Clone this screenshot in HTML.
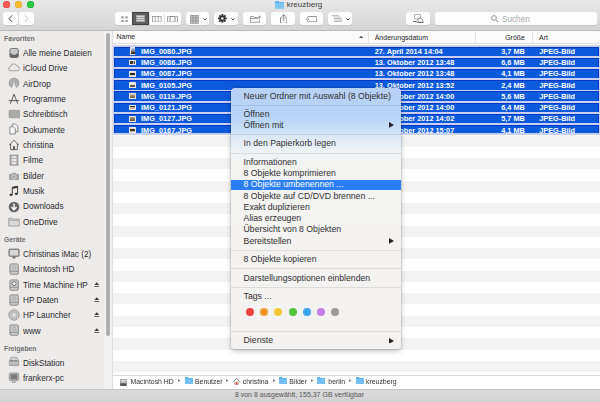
<!DOCTYPE html>
<html><head><meta charset="utf-8"><style>
html,body{margin:0;padding:0;}
body{width:600px;height:402px;overflow:hidden;position:relative;background:#fff;font-family:"Liberation Sans", sans-serif;}
.t{position:absolute;white-space:nowrap;}
.b{position:absolute;}
#wrap{position:absolute;left:0;top:0;width:600px;height:402px;overflow:hidden;filter:blur(0.3px);}
</style></head><body><div id="wrap">
<div class="b" style="left:0.00px;top:0.00px;width:600.00px;height:30.50px;background:linear-gradient(#e8e8e8,#d4d4d4);"></div>
<div class="b" style="left:0.00px;top:29.50px;width:600.00px;height:1.25px;background:#b9b9b9;"></div>
<div class="b" style="left:3.00px;top:1.10px;width:7.00px;height:7.00px;border-radius:50%;background:#fc5b57;box-shadow:inset 0 0 0 0.5px #e0443e;"></div>
<div class="b" style="left:15.00px;top:1.10px;width:7.00px;height:7.00px;border-radius:50%;background:#fdbb2f;box-shadow:inset 0 0 0 0.5px #dea236;"></div>
<div class="b" style="left:26.90px;top:1.10px;width:7.00px;height:7.00px;border-radius:50%;background:#2cc840;box-shadow:inset 0 0 0 0.5px #1aab29;"></div>
<svg class="b" style="left:274.70px;top:1.20px" width="9.5" height="7.5" viewBox="0 0 9.5 7.5"><path d="M0 1 Q0 0 1 0 L3.6 0 L4.4 1 L8.5 1 Q9.5 1 9.5 2 L9.5 6.5 Q9.5 7.5 8.5 7.5 L1 7.5 Q0 7.5 0 6.5 Z" fill="#5eb4f2"/><rect x="0" y="2" width="9.5" height="5.5" rx="1" fill="#7cc6f8"/></svg>
<div class="t" style="left:286.70px;top:1.00px;font-size:8px;line-height:8px;color:#404040;font-weight:normal;">kreuzberg</div>
<div class="b" style="left:3.00px;top:12.40px;width:14.90px;height:12.60px;background:#fdfdfd;border-radius:2.5px;box-shadow:0 0.6px 0.6px rgba(0,0,0,0.18);"></div>
<div class="b" style="left:19.00px;top:12.40px;width:15.00px;height:12.60px;background:#fdfdfd;border-radius:2.5px;box-shadow:0 0.6px 0.6px rgba(0,0,0,0.18);"></div>
<svg class="b" style="left:8.00px;top:15.20px" width="5" height="7.4" viewBox="0 0 5 7.4"><path d="M4.2 0.4 L1 3.7 L4.2 7" fill="none" stroke="#3c3c3c" stroke-width="1"/></svg>
<svg class="b" style="left:23.50px;top:15.20px" width="5" height="7.4" viewBox="0 0 5 7.4"><path d="M0.8 0.4 L4 3.7 L0.8 7" fill="none" stroke="#c4c4c4" stroke-width="1"/></svg>
<div class="b" style="left:115.00px;top:12.40px;width:65.70px;height:12.60px;background:#fdfdfd;border-radius:2.5px;box-shadow:0 0.6px 0.6px rgba(0,0,0,0.18);"></div>
<div class="b" style="left:132.00px;top:12.40px;width:16.70px;height:12.60px;background:#5e5e5e;box-shadow:inset 0 0 0 0.7px #3a3a3a;"></div>
<div class="b" style="left:164.00px;top:13.50px;width:0.60px;height:10.70px;background:#e2e2e2;"></div>
<div class="b" style="left:148.70px;top:13.50px;width:0.50px;height:10.70px;background:#e2e2e2;"></div>
<svg class="b" style="left:120.50px;top:15.50px" width="7" height="6.5" viewBox="0 0 7 6.5"><rect x="0.3" y="0.2" width="2.4" height="2.2" rx="0.4" fill="#9a9a9a"/><rect x="4.3" y="0.2" width="2.4" height="2.2" rx="0.4" fill="#9a9a9a"/><rect x="0.3" y="4" width="2.4" height="2.2" rx="0.4" fill="#9a9a9a"/><rect x="4.3" y="4" width="2.4" height="2.2" rx="0.4" fill="#9a9a9a"/></svg>
<svg class="b" style="left:136.00px;top:15.30px" width="9" height="7" viewBox="0 0 9 7"><rect x="0" y="0" width="9" height="7" fill="#8d8d8d"/><rect x="0.6" y="0.6" width="7.8" height="1.4" fill="#d8d8d8"/><rect x="0.6" y="2.8" width="7.8" height="1.4" fill="#d8d8d8"/><rect x="0.6" y="5" width="7.8" height="1.4" fill="#d8d8d8"/></svg>
<svg class="b" style="left:152.00px;top:15.50px" width="9.5" height="6.5" viewBox="0 0 9.5 6.5"><rect x="0.4" y="0.4" width="8.7" height="5.7" fill="none" stroke="#8a8a8a" stroke-width="0.7"/><line x1="3.3" y1="0.4" x2="3.3" y2="6.1" stroke="#8a8a8a" stroke-width="0.7"/><line x1="6.2" y1="0.4" x2="6.2" y2="6.1" stroke="#8a8a8a" stroke-width="0.7"/></svg>
<svg class="b" style="left:167.00px;top:15.50px" width="11" height="6.5" viewBox="0 0 11 6.5"><path d="M2 0.4 H0.4 V6.1 H2 M9 0.4 H10.6 V6.1 H9" fill="none" stroke="#888" stroke-width="0.8"/><rect x="3" y="0.4" width="5" height="5.7" fill="none" stroke="#777" stroke-width="0.8"/></svg>
<div class="b" style="left:186.10px;top:12.40px;width:23.40px;height:12.60px;background:#fdfdfd;border-radius:2.5px;box-shadow:0 0.6px 0.6px rgba(0,0,0,0.18);"></div>
<svg class="b" style="left:189.60px;top:15.20px" width="9.2" height="8.6" viewBox="0 0 9.2 8.6"><rect x="0.3" y="0.30" width="2.5" height="2.3" fill="#c8c8c8" stroke="#8c8c8c" stroke-width="0.6"/><rect x="3.4" y="0.30" width="2.5" height="2.3" fill="#c8c8c8" stroke="#8c8c8c" stroke-width="0.6"/><rect x="6.5" y="0.30" width="2.5" height="2.3" fill="#c8c8c8" stroke="#8c8c8c" stroke-width="0.6"/><rect x="0.3" y="3.15" width="2.5" height="2.3" fill="#c8c8c8" stroke="#8c8c8c" stroke-width="0.6"/><rect x="3.4" y="3.15" width="2.5" height="2.3" fill="#c8c8c8" stroke="#8c8c8c" stroke-width="0.6"/><rect x="6.5" y="3.15" width="2.5" height="2.3" fill="#c8c8c8" stroke="#8c8c8c" stroke-width="0.6"/><rect x="0.3" y="6.00" width="2.5" height="2.3" fill="#c8c8c8" stroke="#8c8c8c" stroke-width="0.6"/><rect x="3.4" y="6.00" width="2.5" height="2.3" fill="#c8c8c8" stroke="#8c8c8c" stroke-width="0.6"/><rect x="6.5" y="6.00" width="2.5" height="2.3" fill="#c8c8c8" stroke="#8c8c8c" stroke-width="0.6"/></svg>
<svg class="b" style="left:202.80px;top:17.80px" width="4" height="2.6" viewBox="0 0 4 2.6"><path d="M0.4 0.4 L2 2 L3.6 0.4" fill="none" stroke="#444" stroke-width="1"/></svg>
<div class="b" style="left:214.40px;top:12.40px;width:23.30px;height:12.60px;background:#fdfdfd;border-radius:2.5px;box-shadow:0 0.6px 0.6px rgba(0,0,0,0.18);"></div>
<svg class="b" style="left:218.40px;top:14.40px" width="8.8" height="8.8" viewBox="0 0 8.8 8.8"><polygon points="6.83,3.48 8.81,3.51 8.81,5.29 6.83,5.32 6.77,5.47 8.15,6.89 6.89,8.15 5.47,6.77 5.32,6.83 5.29,8.81 3.51,8.81 3.48,6.83 3.33,6.77 1.91,8.15 0.65,6.89 2.03,5.47 1.97,5.32 -0.01,5.29 -0.01,3.51 1.97,3.48 2.03,3.33 0.65,1.91 1.91,0.65 3.33,2.03 3.48,1.97 3.51,-0.01 5.29,-0.01 5.32,1.97 5.47,2.03 6.89,0.65 8.15,1.91 6.77,3.33" fill="#333"/><circle cx="4.4" cy="4.4" r="2.9" fill="#333"/><circle cx="4.4" cy="4.4" r="1.25" fill="#fdfdfd"/></svg>
<svg class="b" style="left:231.20px;top:17.80px" width="4" height="2.6" viewBox="0 0 4 2.6"><path d="M0.4 0.4 L2 2 L3.6 0.4" fill="none" stroke="#444" stroke-width="1"/></svg>
<div class="b" style="left:242.70px;top:12.40px;width:23.70px;height:12.60px;background:#fdfdfd;border-radius:2.5px;box-shadow:0 0.6px 0.6px rgba(0,0,0,0.18);"></div>
<svg class="b" style="left:249.50px;top:14.50px" width="12" height="8" viewBox="0 0 12 8"><path d="M0.5 1.5 L3.5 1.5 L4.3 2.5 L8 2.5 M0.5 1.5 L0.5 7.3 L9.5 7.3 L9.5 4.5 M0.5 3.5 L8.5 3.5" fill="none" stroke="#8a8a8a" stroke-width="0.8"/><path d="M9.5 0.5 V3.5 M8 2 H11" stroke="#8a8a8a" stroke-width="0.8"/></svg>
<div class="b" style="left:271.20px;top:12.40px;width:23.80px;height:12.60px;background:#fdfdfd;border-radius:2.5px;box-shadow:0 0.6px 0.6px rgba(0,0,0,0.18);"></div>
<svg class="b" style="left:279.50px;top:13.50px" width="7.5" height="9.8" viewBox="0 0 7.5 9.8"><path d="M2.2 3.9 H0.5 V9.3 H7 V3.9 H5.3" fill="none" stroke="#666" stroke-width="0.8"/><path d="M3.75 6.8 V0.7 M1.9 2.6 L3.75 0.7 L5.6 2.6" fill="none" stroke="#666" stroke-width="0.8"/></svg>
<div class="b" style="left:299.80px;top:12.40px;width:23.40px;height:12.60px;background:#fdfdfd;border-radius:2.5px;box-shadow:0 0.6px 0.6px rgba(0,0,0,0.18);"></div>
<svg class="b" style="left:305.80px;top:15.50px" width="11.2" height="6.2" viewBox="0 0 11.2 6.2"><path d="M2.5 0.4 H10.2 Q10.8 0.4 10.8 1 V5.2 Q10.8 5.8 10.2 5.8 H2.5 L0.4 3.1 Z" fill="none" stroke="#707070" stroke-width="0.8"/><circle cx="2.6" cy="3.1" r="0.6" fill="#707070"/></svg>
<div class="b" style="left:328.20px;top:12.40px;width:23.60px;height:12.60px;background:#fdfdfd;border-radius:2.5px;box-shadow:0 0.6px 0.6px rgba(0,0,0,0.18);"></div>
<svg class="b" style="left:331.80px;top:15.00px" width="10.2" height="7" viewBox="0 0 10.2 7"><path d="M0 0.5 H7 M1 2 H8.5 M2 3.5 H10 M2 5 H10 M2 6.5 H10" stroke="#9a9a9a" stroke-width="0.65"/></svg>
<svg class="b" style="left:345.50px;top:17.80px" width="4" height="2.6" viewBox="0 0 4 2.6"><path d="M0.4 0.4 L2 2 L3.6 0.4" fill="none" stroke="#444" stroke-width="1"/></svg>
<div class="b" style="left:406.40px;top:12.40px;width:23.60px;height:12.60px;background:#fdfdfd;border-radius:2.5px;box-shadow:0 0.6px 0.6px rgba(0,0,0,0.18);"></div>
<svg class="b" style="left:412.50px;top:14.30px" width="11" height="9" viewBox="0 0 11 9"><rect x="1.6" y="0.5" width="6" height="4.6" rx="0.5" fill="none" stroke="#888" stroke-width="0.7"/><path d="M4.6 7.2 Q4.6 4 7.2 4 Q9.8 4 9.8 7.2" fill="#fdfdfd" stroke="#666" stroke-width="0.7"/><path d="M0.3 7.6 H3.6 M4.2 8.3 H10.6" stroke="#333" stroke-width="0.9"/></svg>
<div class="b" style="left:435.00px;top:12.40px;width:161.70px;height:12.60px;background:#fdfdfd;border-radius:2.5px;box-shadow:0 0.6px 0.6px rgba(0,0,0,0.18);"></div>
<svg class="b" style="left:491.00px;top:14.80px" width="7.5" height="7.5" viewBox="0 0 7.5 7.5"><circle cx="3" cy="3" r="2.4" fill="none" stroke="#8a8a8a" stroke-width="0.9"/><path d="M4.8 4.8 L7 7" stroke="#8a8a8a" stroke-width="1"/></svg>
<div class="t" style="left:502.00px;top:16.00px;font-size:8.2px;line-height:8.2px;color:#a8a8a8;font-weight:normal;">Suchen</div>
<div class="b" style="left:0.00px;top:30.75px;width:112.50px;height:358.25px;background:#ecebea;"></div>
<div class="b" style="left:112.20px;top:30.75px;width:0.80px;height:358.25px;background:#dedede;"></div>
<div class="b" style="left:103.60px;top:30.75px;width:8.70px;height:358.25px;background:#f1f1f1;"></div>
<div class="b" style="left:105.50px;top:32.50px;width:4.50px;height:303.00px;background:linear-gradient(90deg,#b8b8b8,#a9a9a9 50%,#b8b8b8);border-radius:2.3px;"></div>
<div class="t" style="left:4.00px;top:36.00px;font-size:6.8px;line-height:6.8px;color:#707070;font-weight:bold;">Favoriten</div>
<div class="t" style="left:23.00px;top:50.00px;font-size:8.2px;line-height:8.2px;color:#2a2a2a;font-weight:normal;">Alle meine Dateien</div>
<svg class="b" style="left:8.30px;top:46.50px" width="12" height="12" viewBox="0 0 12 12"><rect x="1.9" y="1.5" width="8.4" height="9" rx="1.4" fill="#c8c8c8" stroke="#5a5a5a" stroke-width="0.8"/><path d="M1.9 6.6 H3.6 Q4.1 8 6.1 8 Q8.1 8 8.6 6.6 H10.3 V9.1 Q10.3 10.5 8.9 10.5 H3.3 Q1.9 10.5 1.9 9.1 Z" fill="#666"/></svg>
<div class="t" style="left:23.00px;top:65.00px;font-size:8.2px;line-height:8.2px;color:#2a2a2a;font-weight:normal;">iCloud Drive</div>
<svg class="b" style="left:8.30px;top:61.20px" width="12" height="12" viewBox="0 0 12 12"><path d="M2.9 9.8 A2.1 2.1 0 0 1 2.6 5.6 A3.3 3.3 0 0 1 8.9 4.9 A2.45 2.45 0 0 1 9.1 9.8 Z" fill="none" stroke="#8a8a8a" stroke-width="0.8"/></svg>
<div class="t" style="left:23.00px;top:81.00px;font-size:8.2px;line-height:8.2px;color:#2a2a2a;font-weight:normal;">AirDrop</div>
<svg class="b" style="left:8.30px;top:77.20px" width="12" height="12" viewBox="0 0 12 12"><circle cx="6" cy="6" r="5.3" fill="#9a9a9a"/><circle cx="6" cy="6" r="4" fill="none" stroke="#cfcfcf" stroke-width="0.55"/><circle cx="6" cy="6" r="2.6" fill="none" stroke="#cfcfcf" stroke-width="0.55"/><circle cx="6" cy="6" r="1.2" fill="#cfcfcf"/><path d="M6 6.2 L3.4 11.8 H8.6 Z" fill="#ebebeb"/></svg>
<div class="t" style="left:23.00px;top:96.00px;font-size:8.2px;line-height:8.2px;color:#2a2a2a;font-weight:normal;">Programme</div>
<svg class="b" style="left:8.30px;top:92.70px" width="12" height="12" viewBox="0 0 12 12"><path d="M6 1.2 L2.2 10.8 M6 1.2 L9.8 10.8 M0.8 7.6 H11.2" stroke="#4e4e4e" stroke-width="0.9" fill="none"/></svg>
<div class="t" style="left:23.00px;top:111.00px;font-size:8.2px;line-height:8.2px;color:#2a2a2a;font-weight:normal;">Schreibtisch</div>
<svg class="b" style="left:8.30px;top:108.20px" width="12" height="12" viewBox="0 0 12 12"><rect x="1" y="2.3" width="10.8" height="7.5" rx="0.8" fill="#a9a9a9" stroke="#8e8e8e" stroke-width="0.6"/></svg>
<div class="t" style="left:23.00px;top:127.00px;font-size:8.2px;line-height:8.2px;color:#2a2a2a;font-weight:normal;">Dokumente</div>
<svg class="b" style="left:8.30px;top:123.30px" width="12" height="12" viewBox="0 0 12 12"><path d="M4.3 1 H7.6 L9.9 3.3 V8.8 H4.3 Z" fill="#f2f2f2" stroke="#777" stroke-width="0.8"/><path d="M1.8 3.8 H5.3 L7.4 5.9 V11 H1.8 Z" fill="#f4f4f4" stroke="#777" stroke-width="0.8"/></svg>
<div class="t" style="left:23.00px;top:142.00px;font-size:8.2px;line-height:8.2px;color:#2a2a2a;font-weight:normal;">christina</div>
<svg class="b" style="left:8.30px;top:138.70px" width="12" height="12" viewBox="0 0 12 12"><path d="M1 6.2 L6 1.3 L11 6.2 M2.6 4.8 V10.6 H9.4 V4.8" fill="none" stroke="#555" stroke-width="0.9"/><rect x="5" y="7.3" width="2" height="3.3" fill="#555"/></svg>
<div class="t" style="left:23.00px;top:157.00px;font-size:8.2px;line-height:8.2px;color:#2a2a2a;font-weight:normal;">Filme</div>
<svg class="b" style="left:8.30px;top:153.80px" width="12" height="12" viewBox="0 0 12 12"><rect x="2.2" y="1.2" width="7.6" height="9.8" fill="#ececec" stroke="#7a7a7a" stroke-width="0.9"/><path d="M2.2 4.4 H9.8 M2.2 7.7 H9.8 M3.7 1.2 V11 M8.3 1.2 V11" stroke="#999" stroke-width="0.6"/></svg>
<div class="t" style="left:23.00px;top:173.00px;font-size:8.2px;line-height:8.2px;color:#2a2a2a;font-weight:normal;">Bilder</div>
<svg class="b" style="left:8.30px;top:170.20px" width="12" height="12" viewBox="0 0 12 12"><path d="M1 4 H3.5 L4.3 2.7 H7.7 L8.5 4 H11 V10 H1 Z" fill="#a3a3a3"/><circle cx="6" cy="6.9" r="2.1" fill="none" stroke="#dedede" stroke-width="0.8"/></svg>
<div class="t" style="left:23.00px;top:188.00px;font-size:8.2px;line-height:8.2px;color:#2a2a2a;font-weight:normal;">Musik</div>
<svg class="b" style="left:8.30px;top:185.10px" width="12" height="12" viewBox="0 0 12 12"><path d="M4.3 9.6 V2.3 L9.6 1.2 V8.6" fill="none" stroke="#2e2e2e" stroke-width="0.9"/><ellipse cx="3" cy="9.8" rx="1.6" ry="1.15" fill="#2e2e2e"/><ellipse cx="8.3" cy="8.8" rx="1.6" ry="1.15" fill="#2e2e2e"/><path d="M4.3 2.3 L9.6 1.2 V2.7 L4.3 3.8 Z" fill="#2e2e2e"/></svg>
<div class="t" style="left:23.00px;top:203.00px;font-size:8.2px;line-height:8.2px;color:#2a2a2a;font-weight:normal;">Downloads</div>
<svg class="b" style="left:8.30px;top:200.60px" width="12" height="12" viewBox="0 0 12 12"><circle cx="6" cy="6" r="5.3" fill="#656565"/><path d="M6 2.6 V8.6 M3.4 6.1 L6 8.8 L8.6 6.1" stroke="#fff" stroke-width="1.4" fill="none"/></svg>
<div class="t" style="left:23.00px;top:219.00px;font-size:8.2px;line-height:8.2px;color:#2a2a2a;font-weight:normal;">OneDrive</div>
<svg class="b" style="left:8.30px;top:215.50px" width="12" height="12" viewBox="0 0 12 12"><path d="M0.8 2.2 H4.3 L5.2 3.2 H11.2 V10 H0.8 Z" fill="#dadada" stroke="#888" stroke-width="0.7"/><path d="M0.8 4.2 H11.2" stroke="#888" stroke-width="0.6"/></svg>
<div class="t" style="left:4.00px;top:237.00px;font-size:6.8px;line-height:6.8px;color:#707070;font-weight:bold;">Geräte</div>
<div class="t" style="left:23.00px;top:251.00px;font-size:8.2px;line-height:8.2px;color:#2a2a2a;font-weight:normal;">Christinas iMac (2)</div>
<svg class="b" style="left:8.30px;top:248.30px" width="12" height="12" viewBox="0 0 12 12"><rect x="1" y="1.2" width="10" height="7" rx="0.8" fill="#d6d6d6" stroke="#505050" stroke-width="0.9"/><path d="M4.8 8.3 L4.3 10.4 H7.7 L7.2 8.3 Z" fill="#777"/></svg>
<div class="t" style="left:23.00px;top:266.00px;font-size:8.2px;line-height:8.2px;color:#2a2a2a;font-weight:normal;">Macintosh HD</div>
<svg class="b" style="left:8.30px;top:263.30px" width="12" height="12" viewBox="0 0 12 12"><rect x="1.9" y="0.9" width="8.4" height="10.4" rx="1.3" fill="#cacaca" stroke="#7a7a7a" stroke-width="0.8"/><path d="M1.9 8.3 H10.3" stroke="#7a7a7a" stroke-width="0.7"/><circle cx="6.1" cy="4.6" r="1.7" fill="none" stroke="#999" stroke-width="0.6"/></svg>
<div class="t" style="left:23.00px;top:282.00px;font-size:8.2px;line-height:8.2px;color:#2a2a2a;font-weight:normal;">Time Machine HP</div>
<svg class="b" style="left:8.30px;top:278.60px" width="12" height="12" viewBox="0 0 12 12"><rect x="1.9" y="0.9" width="8.4" height="10.4" rx="1.3" fill="#cacaca" stroke="#7a7a7a" stroke-width="0.8"/><path d="M1.9 8.3 H10.3" stroke="#7a7a7a" stroke-width="0.7"/><circle cx="6.1" cy="4.6" r="2" fill="#f0f0f0" stroke="#555" stroke-width="0.7"/></svg>
<svg class="b" style="left:94.00px;top:281.66px" width="5.5" height="5" viewBox="0 0 5.5 5"><path d="M2.75 0.3 L5.2 3 H0.3 Z M0.3 4 H5.2 V4.8 H0.3 Z" fill="#3a3a3a"/></svg>
<div class="t" style="left:23.00px;top:297.00px;font-size:8.2px;line-height:8.2px;color:#2a2a2a;font-weight:normal;">HP Daten</div>
<svg class="b" style="left:8.30px;top:294.10px" width="12" height="12" viewBox="0 0 12 12"><rect x="1.9" y="0.9" width="8.4" height="10.4" rx="1.3" fill="#cacaca" stroke="#7a7a7a" stroke-width="0.8"/><path d="M1.9 8.3 H10.3" stroke="#7a7a7a" stroke-width="0.7"/><circle cx="6.1" cy="4.6" r="1.7" fill="none" stroke="#999" stroke-width="0.6"/></svg>
<svg class="b" style="left:94.00px;top:296.99px" width="5.5" height="5" viewBox="0 0 5.5 5"><path d="M2.75 0.3 L5.2 3 H0.3 Z M0.3 4 H5.2 V4.8 H0.3 Z" fill="#3a3a3a"/></svg>
<div class="t" style="left:23.00px;top:312.00px;font-size:8.2px;line-height:8.2px;color:#2a2a2a;font-weight:normal;">HP Launcher</div>
<svg class="b" style="left:8.30px;top:309.30px" width="12" height="12" viewBox="0 0 12 12"><circle cx="6" cy="6" r="5.2" fill="#d0d0d0" stroke="#8a8a8a" stroke-width="0.8"/><circle cx="6" cy="6" r="3.3" fill="none" stroke="#9a9a9a" stroke-width="0.6"/><circle cx="6" cy="6" r="1" fill="#eee"/></svg>
<svg class="b" style="left:94.00px;top:312.32px" width="5.5" height="5" viewBox="0 0 5.5 5"><path d="M2.75 0.3 L5.2 3 H0.3 Z M0.3 4 H5.2 V4.8 H0.3 Z" fill="#3a3a3a"/></svg>
<div class="t" style="left:23.00px;top:328.00px;font-size:8.2px;line-height:8.2px;color:#2a2a2a;font-weight:normal;">www</div>
<svg class="b" style="left:8.30px;top:324.40px" width="12" height="12" viewBox="0 0 12 12"><rect x="1.9" y="0.9" width="8.4" height="10.4" rx="1.3" fill="#cacaca" stroke="#7a7a7a" stroke-width="0.8"/><path d="M1.9 8.3 H10.3" stroke="#7a7a7a" stroke-width="0.7"/><circle cx="6.1" cy="4.6" r="1.7" fill="none" stroke="#999" stroke-width="0.6"/></svg>
<svg class="b" style="left:94.00px;top:327.65px" width="5.5" height="5" viewBox="0 0 5.5 5"><path d="M2.75 0.3 L5.2 3 H0.3 Z M0.3 4 H5.2 V4.8 H0.3 Z" fill="#3a3a3a"/></svg>
<div class="t" style="left:4.00px;top:346.00px;font-size:6.8px;line-height:6.8px;color:#707070;font-weight:bold;">Freigaben</div>
<div class="t" style="left:23.00px;top:360.00px;font-size:8.2px;line-height:8.2px;color:#2a2a2a;font-weight:normal;">DiskStation</div>
<svg class="b" style="left:8.30px;top:356.20px" width="12" height="12" viewBox="0 0 12 12"><path d="M1.8 4.5 L3 1.3 H9 L10.2 4.5 Z" fill="#d4d4d4" stroke="#888" stroke-width="0.7"/><rect x="1.3" y="4.5" width="9.4" height="5" rx="0.5" fill="#b8b8b8" stroke="#888" stroke-width="0.7"/><path d="M1.3 6.8 H10.7" stroke="#d8d8d8" stroke-width="0.6"/><path d="M3 5.6 H5 M7 5.6 H9" stroke="#666" stroke-width="0.6"/></svg>
<div class="t" style="left:23.00px;top:375.00px;font-size:8.2px;line-height:8.2px;color:#2a2a2a;font-weight:normal;">frankerx-pc</div>
<svg class="b" style="left:8.30px;top:372.10px" width="12" height="12" viewBox="0 0 12 12"><rect x="1.3" y="1" width="9.4" height="7.6" rx="1.2" fill="#c4c4c4" stroke="#808080" stroke-width="0.7"/><rect x="2.6" y="2.2" width="6.8" height="5.2" fill="#7a7a7a"/><path d="M3.8 10.2 H8.2" stroke="#888" stroke-width="1"/></svg>
<div class="b" style="left:113.00px;top:30.75px;width:487.00px;height:344.75px;background:#ffffff;"></div>
<div class="b" style="left:113.00px;top:30.75px;width:487.00px;height:12.75px;background:#fcfcfc;"></div>
<div class="b" style="left:113.00px;top:43.20px;width:487.00px;height:1.20px;background:#dedede;"></div>
<div class="t" style="left:116.50px;top:33.00px;font-size:7px;line-height:7px;color:#1c1c1c;font-weight:normal;">Name</div>
<svg class="b" style="left:359.30px;top:35.60px" width="4.2" height="2.6" viewBox="0 0 4.2 2.6"><path d="M0.5 2.3 L2.1 0.7 L3.7 2.3" fill="none" stroke="#3a3a3a" stroke-width="1.1"/></svg>
<div class="b" style="left:367.60px;top:32.00px;width:0.80px;height:11.00px;background:#e2e2e2;"></div>
<div class="b" style="left:475.20px;top:32.00px;width:0.80px;height:11.00px;background:#e2e2e2;"></div>
<div class="b" style="left:532.20px;top:32.00px;width:0.80px;height:11.00px;background:#e2e2e2;"></div>
<div class="t" style="left:374.70px;top:34.00px;font-size:7px;line-height:7px;color:#1c1c1c;font-weight:normal;">Änderungsdatum</div>
<div class="t" style="right:75.00px;top:34.00px;font-size:7px;line-height:7px;color:#1c1c1c;font-weight:normal;">Größe</div>
<div class="t" style="left:539.00px;top:34.00px;font-size:7px;line-height:7px;color:#1c1c1c;font-weight:normal;">Art</div>
<div class="b" style="left:113.00px;top:135.58px;width:487.00px;height:11.26px;background:#f3f3f3;"></div>
<div class="b" style="left:113.00px;top:158.10px;width:487.00px;height:11.26px;background:#f3f3f3;"></div>
<div class="b" style="left:113.00px;top:180.62px;width:487.00px;height:11.26px;background:#f3f3f3;"></div>
<div class="b" style="left:113.00px;top:203.14px;width:487.00px;height:11.26px;background:#f3f3f3;"></div>
<div class="b" style="left:113.00px;top:225.66px;width:487.00px;height:11.26px;background:#f3f3f3;"></div>
<div class="b" style="left:113.00px;top:248.18px;width:487.00px;height:11.26px;background:#f3f3f3;"></div>
<div class="b" style="left:113.00px;top:270.70px;width:487.00px;height:11.26px;background:#f3f3f3;"></div>
<div class="b" style="left:113.00px;top:293.22px;width:487.00px;height:11.26px;background:#f3f3f3;"></div>
<div class="b" style="left:113.00px;top:315.74px;width:487.00px;height:11.26px;background:#f3f3f3;"></div>
<div class="b" style="left:113.00px;top:338.26px;width:487.00px;height:11.26px;background:#f3f3f3;"></div>
<div class="b" style="left:113.00px;top:360.78px;width:487.00px;height:11.26px;background:#f3f3f3;"></div>
<div class="b" style="left:113.00px;top:45.20px;width:486.50px;height:89.60px;background:#c9d0f4;"></div>
<div class="b" style="left:113.80px;top:47.20px;width:485.20px;height:8.74px;background:#0c5adc;border-top:0.8px solid #0038c8;border-left:0.8px solid #0038c8;border-right:0.8px solid #0038c8;box-sizing:border-box;"></div>
<div class="b" style="left:130.20px;top:46.90px;width:5.20px;height:8.20px;background:#efebe2;border-radius:0.6px;"></div>
<div class="b" style="left:131.00px;top:47.70px;width:3.60px;height:6.60px;background:linear-gradient(#c9d2e6 0%,#8c8f9c 45%,#5a4632 70%,#1e1a16 100%);"></div>
<div class="t" style="left:141.00px;top:48.00px;font-size:7.35px;line-height:7.35px;color:#ffffff;font-weight:bold;">IMG_0080.JPG</div>
<div class="t" style="left:374.70px;top:48.00px;font-size:7.35px;line-height:7.35px;color:#ffffff;font-weight:bold;">27. April 2014 14:04</div>
<div class="t" style="right:75.20px;top:48.00px;font-size:7.35px;line-height:7.35px;color:#ffffff;font-weight:bold;">3,7 MB</div>
<div class="t" style="left:539.20px;top:48.00px;font-size:7.35px;line-height:7.35px;color:#ffffff;font-weight:bold;">JPEG-Bild</div>
<div class="b" style="left:113.80px;top:57.54px;width:485.20px;height:9.64px;background:#0c5adc;border-top:0.8px solid #0038c8;border-left:0.8px solid #0038c8;border-right:0.8px solid #0038c8;box-sizing:border-box;"></div>
<div class="b" style="left:129.30px;top:59.64px;width:6.90px;height:5.70px;background:#efebe2;border-radius:0.6px;"></div>
<div class="b" style="left:130.40px;top:60.74px;width:4.70px;height:3.60px;background:linear-gradient(90deg,#3a3632 0 55%,#c8bea8 55% 72%,#4a4642 72%);"></div>
<div class="t" style="left:141.00px;top:59.00px;font-size:7.35px;line-height:7.35px;color:#ffffff;font-weight:bold;">IMG_0086.JPG</div>
<div class="t" style="left:374.70px;top:59.00px;font-size:7.35px;line-height:7.35px;color:#ffffff;font-weight:bold;">13. Oktober 2012 13:48</div>
<div class="t" style="right:75.20px;top:59.00px;font-size:7.35px;line-height:7.35px;color:#ffffff;font-weight:bold;">6,6 MB</div>
<div class="t" style="left:539.20px;top:59.00px;font-size:7.35px;line-height:7.35px;color:#ffffff;font-weight:bold;">JPEG-Bild</div>
<div class="b" style="left:113.80px;top:68.78px;width:485.20px;height:9.64px;background:#0c5adc;border-top:0.8px solid #0038c8;border-left:0.8px solid #0038c8;border-right:0.8px solid #0038c8;box-sizing:border-box;"></div>
<div class="b" style="left:129.30px;top:70.88px;width:6.90px;height:5.70px;background:#efebe2;border-radius:0.6px;"></div>
<div class="b" style="left:130.40px;top:71.98px;width:4.70px;height:3.60px;background:linear-gradient(#e4e0d8 0 30%,#2a2a2a 30% 70%,#d8d3c8 70%);"></div>
<div class="t" style="left:141.00px;top:70.00px;font-size:7.35px;line-height:7.35px;color:#ffffff;font-weight:bold;">IMG_0087.JPG</div>
<div class="t" style="left:374.70px;top:70.00px;font-size:7.35px;line-height:7.35px;color:#ffffff;font-weight:bold;">13. Oktober 2012 13:48</div>
<div class="t" style="right:75.20px;top:70.00px;font-size:7.35px;line-height:7.35px;color:#ffffff;font-weight:bold;">4,1 MB</div>
<div class="t" style="left:539.20px;top:70.00px;font-size:7.35px;line-height:7.35px;color:#ffffff;font-weight:bold;">JPEG-Bild</div>
<div class="b" style="left:113.80px;top:80.02px;width:485.20px;height:9.64px;background:#0c5adc;border-top:0.8px solid #0038c8;border-left:0.8px solid #0038c8;border-right:0.8px solid #0038c8;box-sizing:border-box;"></div>
<div class="b" style="left:129.30px;top:82.12px;width:6.90px;height:5.70px;background:#efebe2;border-radius:0.6px;"></div>
<div class="b" style="left:130.40px;top:83.22px;width:4.70px;height:3.60px;background:linear-gradient(#e8e4dc 0 45%,#5a544c 45%);"></div>
<div class="t" style="left:141.00px;top:82.00px;font-size:7.35px;line-height:7.35px;color:#ffffff;font-weight:bold;">IMG_0105.JPG</div>
<div class="t" style="left:374.70px;top:82.00px;font-size:7.35px;line-height:7.35px;color:#ffffff;font-weight:bold;">13. Oktober 2012 13:52</div>
<div class="t" style="right:75.20px;top:82.00px;font-size:7.35px;line-height:7.35px;color:#ffffff;font-weight:bold;">2,4 MB</div>
<div class="t" style="left:539.20px;top:82.00px;font-size:7.35px;line-height:7.35px;color:#ffffff;font-weight:bold;">JPEG-Bild</div>
<div class="b" style="left:113.80px;top:91.26px;width:485.20px;height:9.64px;background:#0c5adc;border-top:0.8px solid #0038c8;border-left:0.8px solid #0038c8;border-right:0.8px solid #0038c8;box-sizing:border-box;"></div>
<div class="b" style="left:129.30px;top:93.36px;width:6.90px;height:5.70px;background:#efebe2;border-radius:0.6px;"></div>
<div class="b" style="left:130.40px;top:94.46px;width:4.70px;height:3.60px;background:linear-gradient(#c8b8a0,#6a5a48);"></div>
<div class="t" style="left:141.00px;top:93.00px;font-size:7.35px;line-height:7.35px;color:#ffffff;font-weight:bold;">IMG_0119.JPG</div>
<div class="t" style="left:374.70px;top:93.00px;font-size:7.35px;line-height:7.35px;color:#ffffff;font-weight:bold;">13. Oktober 2012 14:00</div>
<div class="t" style="right:75.20px;top:93.00px;font-size:7.35px;line-height:7.35px;color:#ffffff;font-weight:bold;">5,6 MB</div>
<div class="t" style="left:539.20px;top:93.00px;font-size:7.35px;line-height:7.35px;color:#ffffff;font-weight:bold;">JPEG-Bild</div>
<div class="b" style="left:113.80px;top:102.50px;width:485.20px;height:9.64px;background:#0c5adc;border-top:0.8px solid #0038c8;border-left:0.8px solid #0038c8;border-right:0.8px solid #0038c8;box-sizing:border-box;"></div>
<div class="b" style="left:129.30px;top:104.60px;width:6.90px;height:5.70px;background:#efebe2;border-radius:0.6px;"></div>
<div class="b" style="left:130.40px;top:105.70px;width:4.70px;height:3.60px;background:linear-gradient(#2a2a2a 0 35%,#c8b8a0 35%);"></div>
<div class="t" style="left:141.00px;top:104.00px;font-size:7.35px;line-height:7.35px;color:#ffffff;font-weight:bold;">IMG_0121.JPG</div>
<div class="t" style="left:374.70px;top:104.00px;font-size:7.35px;line-height:7.35px;color:#ffffff;font-weight:bold;">13. Oktober 2012 14:00</div>
<div class="t" style="right:75.20px;top:104.00px;font-size:7.35px;line-height:7.35px;color:#ffffff;font-weight:bold;">6,4 MB</div>
<div class="t" style="left:539.20px;top:104.00px;font-size:7.35px;line-height:7.35px;color:#ffffff;font-weight:bold;">JPEG-Bild</div>
<div class="b" style="left:113.80px;top:113.74px;width:485.20px;height:9.64px;background:#0c5adc;border-top:0.8px solid #0038c8;border-left:0.8px solid #0038c8;border-right:0.8px solid #0038c8;box-sizing:border-box;"></div>
<div class="b" style="left:129.30px;top:115.84px;width:6.90px;height:5.70px;background:#efebe2;border-radius:0.6px;"></div>
<div class="b" style="left:130.40px;top:116.94px;width:4.70px;height:3.60px;background:linear-gradient(#b8a282,#5e4e3a);"></div>
<div class="t" style="left:141.00px;top:115.00px;font-size:7.35px;line-height:7.35px;color:#ffffff;font-weight:bold;">IMG_0127.JPG</div>
<div class="t" style="left:374.70px;top:115.00px;font-size:7.35px;line-height:7.35px;color:#ffffff;font-weight:bold;">13. Oktober 2012 14:02</div>
<div class="t" style="right:75.20px;top:115.00px;font-size:7.35px;line-height:7.35px;color:#ffffff;font-weight:bold;">5,7 MB</div>
<div class="t" style="left:539.20px;top:115.00px;font-size:7.35px;line-height:7.35px;color:#ffffff;font-weight:bold;">JPEG-Bild</div>
<div class="b" style="left:113.80px;top:124.98px;width:485.20px;height:7.82px;background:#0c5adc;border-top:0.8px solid #0038c8;border-left:0.8px solid #0038c8;border-right:0.8px solid #0038c8;box-sizing:border-box;"></div>
<div class="b" style="left:129.30px;top:127.08px;width:6.90px;height:5.70px;background:#efebe2;border-radius:0.6px;"></div>
<div class="b" style="left:130.40px;top:128.18px;width:4.70px;height:3.60px;background:linear-gradient(#e0d8c8 0 35%,#3e3830 35% 65%,#c0b090 65%);"></div>
<div class="t" style="left:141.00px;top:127.00px;font-size:7.35px;line-height:7.35px;color:#ffffff;font-weight:bold;">IMG_0167.JPG</div>
<div class="t" style="left:374.70px;top:127.00px;font-size:7.35px;line-height:7.35px;color:#ffffff;font-weight:bold;">13. Oktober 2012 15:07</div>
<div class="t" style="right:75.20px;top:127.00px;font-size:7.35px;line-height:7.35px;color:#ffffff;font-weight:bold;">4,1 MB</div>
<div class="t" style="left:539.20px;top:127.00px;font-size:7.35px;line-height:7.35px;color:#ffffff;font-weight:bold;">JPEG-Bild</div>
<div class="b" style="left:113.00px;top:375.20px;width:487.00px;height:1.00px;background:#d9d9d9;"></div>
<div class="b" style="left:113.00px;top:376.20px;width:487.00px;height:12.80px;background:#ffffff;"></div>
<svg class="b" style="left:120.30px;top:378.60px" width="6.8" height="7.2" viewBox="0 0 6.8 7.2"><rect x="0.3" y="0.3" width="6.2" height="6.6" rx="0.8" fill="#b8b8b8" stroke="#666" stroke-width="0.5"/><rect x="0.3" y="4.3" width="6.2" height="2.6" fill="#555"/><rect x="1" y="1" width="4.8" height="1.4" fill="#e4e4e4"/></svg>
<div class="t" style="left:130.50px;top:379.00px;font-size:6.9px;line-height:6.9px;color:#303030;font-weight:normal;">Macintosh HD</div>
<svg class="b" style="left:178.00px;top:379.20px" width="3" height="3.4" viewBox="0 0 3 3.4"><path d="M0 0 L2.6 1.6 L0 3.2 Z" fill="#8a8a8a"/></svg>
<svg class="b" style="left:225.50px;top:379.20px" width="3" height="3.4" viewBox="0 0 3 3.4"><path d="M0 0 L2.6 1.6 L0 3.2 Z" fill="#8a8a8a"/></svg>
<svg class="b" style="left:272.50px;top:379.20px" width="3" height="3.4" viewBox="0 0 3 3.4"><path d="M0 0 L2.6 1.6 L0 3.2 Z" fill="#8a8a8a"/></svg>
<svg class="b" style="left:310.80px;top:379.20px" width="3" height="3.4" viewBox="0 0 3 3.4"><path d="M0 0 L2.6 1.6 L0 3.2 Z" fill="#8a8a8a"/></svg>
<svg class="b" style="left:348.50px;top:379.20px" width="3" height="3.4" viewBox="0 0 3 3.4"><path d="M0 0 L2.6 1.6 L0 3.2 Z" fill="#8a8a8a"/></svg>
<svg class="b" style="left:184.50px;top:377.20px" width="8" height="7" viewBox="0 0 8 7"><path d="M0 1 Q0 0 0.8 0 L3 0 L3.6 0.9 L7.2 0.9 Q8 0.9 8 1.7 L8 6.2 Q8 7 7.2 7 L0.8 7 Q0 7 0 6.2 Z" fill="#57aef0"/><rect x="0" y="1.8" width="8" height="5.2" rx="0.8" fill="#74c0f6"/></svg>
<div class="t" style="left:195.00px;top:379.00px;font-size:6.9px;line-height:6.9px;color:#303030;font-weight:normal;">Benutzer</div>
<svg class="b" style="left:233.00px;top:377.80px" width="7" height="6.8" viewBox="0 0 7 6.8"><path d="M0.4 3.4 L3.5 0.5 L6.6 3.4" fill="none" stroke="#555" stroke-width="0.8"/><path d="M1.4 2.8 V6.5 H5.6 V2.8" fill="#f4f4f4" stroke="#888" stroke-width="0.5"/><rect x="2.7" y="4" width="1.6" height="2.5" fill="#e03020"/></svg>
<div class="t" style="left:242.70px;top:379.00px;font-size:6.9px;line-height:6.9px;color:#303030;font-weight:normal;">christina</div>
<svg class="b" style="left:279.00px;top:377.20px" width="8" height="7" viewBox="0 0 8 7"><path d="M0 1 Q0 0 0.8 0 L3 0 L3.6 0.9 L7.2 0.9 Q8 0.9 8 1.7 L8 6.2 Q8 7 7.2 7 L0.8 7 Q0 7 0 6.2 Z" fill="#57aef0"/><rect x="0" y="1.8" width="8" height="5.2" rx="0.8" fill="#74c0f6"/></svg>
<div class="t" style="left:289.30px;top:379.00px;font-size:6.9px;line-height:6.9px;color:#303030;font-weight:normal;">Bilder</div>
<svg class="b" style="left:317.30px;top:377.20px" width="8" height="7" viewBox="0 0 8 7"><path d="M0 1 Q0 0 0.8 0 L3 0 L3.6 0.9 L7.2 0.9 Q8 0.9 8 1.7 L8 6.2 Q8 7 7.2 7 L0.8 7 Q0 7 0 6.2 Z" fill="#57aef0"/><rect x="0" y="1.8" width="8" height="5.2" rx="0.8" fill="#74c0f6"/></svg>
<div class="t" style="left:328.30px;top:379.00px;font-size:6.9px;line-height:6.9px;color:#303030;font-weight:normal;">berlin</div>
<svg class="b" style="left:355.70px;top:377.20px" width="8" height="7" viewBox="0 0 8 7"><path d="M0 1 Q0 0 0.8 0 L3 0 L3.6 0.9 L7.2 0.9 Q8 0.9 8 1.7 L8 6.2 Q8 7 7.2 7 L0.8 7 Q0 7 0 6.2 Z" fill="#57aef0"/><rect x="0" y="1.8" width="8" height="5.2" rx="0.8" fill="#74c0f6"/></svg>
<div class="t" style="left:366.00px;top:379.00px;font-size:6.9px;line-height:6.9px;color:#303030;font-weight:normal;">kreuzberg</div>
<div class="b" style="left:0.00px;top:388.80px;width:600.00px;height:13.20px;background:linear-gradient(#dcdcdc,#d1d1d1);"></div>
<div class="b" style="left:0.00px;top:388.60px;width:600.00px;height:0.80px;background:#c2c2c2;"></div>
<div class="t" style="left:99.50px;width:400px;text-align:center;top:391.00px;font-size:7px;line-height:7px;color:#555;font-weight:normal;">8 von 8 ausgewählt, 155,37 GB verfügbar</div>
<div class="b" style="left:230.80px;top:87.60px;width:170.70px;height:261.20px;background:linear-gradient(rgb(184,209,246) 0px, rgb(183,212,248) 28.4px, rgb(192,218,248) 36.4px, rgb(208,227,248) 44.4px, rgb(226,236,248) 52.4px, rgb(238,241,245) 62.4px, rgb(243,243,242) 74.4px, rgb(243,242,241) 100%);border-radius:4px;box-shadow:0 1.5px 5px rgba(0,0,0,0.26),0 0 0 0.5px rgba(0,0,0,0.14);"></div>
<div class="t" style="left:243.60px;top:92.00px;font-size:8.7px;line-height:8.7px;color:#2e2e2e;font-weight:normal;">Neuer Ordner mit Auswahl (8 Objekte)</div>
<div class="b" style="left:230.80px;top:104.80px;width:170.70px;height:1.00px;background:rgba(0,0,0,0.09);"></div>
<div class="t" style="left:243.60px;top:110.00px;font-size:8.7px;line-height:8.7px;color:#2e2e2e;font-weight:normal;">Öffnen</div>
<div class="t" style="left:243.60px;top:121.00px;font-size:8.7px;line-height:8.7px;color:#2e2e2e;font-weight:normal;">Öffnen mit</div>
<svg class="b" style="left:389.00px;top:122.40px" width="5" height="5.8" viewBox="0 0 5 5.8"><path d="M0 0 L5 2.9 L0 5.8 Z" fill="#222"/></svg>
<div class="b" style="left:230.80px;top:134.10px;width:170.70px;height:1.00px;background:rgba(0,0,0,0.09);"></div>
<div class="t" style="left:243.60px;top:139.00px;font-size:8.7px;line-height:8.7px;color:#2e2e2e;font-weight:normal;">In den Papierkorb legen</div>
<div class="b" style="left:230.80px;top:152.70px;width:170.70px;height:1.00px;background:rgba(0,0,0,0.09);"></div>
<div class="b" style="left:230.80px;top:180.20px;width:170.70px;height:9.40px;background:#2a7ef3;"></div>
<div class="t" style="left:243.60px;top:158.00px;font-size:8.7px;line-height:8.7px;color:#2e2e2e;font-weight:normal;">Informationen</div>
<div class="t" style="left:243.60px;top:169.00px;font-size:8.7px;line-height:8.7px;color:#2e2e2e;font-weight:normal;">8 Objekte komprimieren</div>
<div class="t" style="left:243.60px;top:180.00px;font-size:8.7px;line-height:8.7px;color:#ffffff;font-weight:normal;">8 Objekte umbenennen ...</div>
<div class="t" style="left:243.60px;top:192.00px;font-size:8.7px;line-height:8.7px;color:#2e2e2e;font-weight:normal;">8 Objekte auf CD/DVD brennen ...</div>
<div class="t" style="left:243.60px;top:203.00px;font-size:8.7px;line-height:8.7px;color:#2e2e2e;font-weight:normal;">Exakt duplizieren</div>
<div class="t" style="left:243.60px;top:214.00px;font-size:8.7px;line-height:8.7px;color:#2e2e2e;font-weight:normal;">Alias erzeugen</div>
<div class="t" style="left:243.60px;top:225.00px;font-size:8.7px;line-height:8.7px;color:#2e2e2e;font-weight:normal;">Übersicht von 8 Objekten</div>
<div class="t" style="left:243.60px;top:237.00px;font-size:8.7px;line-height:8.7px;color:#2e2e2e;font-weight:normal;">Bereitstellen</div>
<svg class="b" style="left:389.00px;top:238.00px" width="5" height="5.8" viewBox="0 0 5 5.8"><path d="M0 0 L5 2.9 L0 5.8 Z" fill="#222"/></svg>
<div class="b" style="left:230.80px;top:249.70px;width:170.70px;height:1.00px;background:rgba(0,0,0,0.09);"></div>
<div class="t" style="left:243.60px;top:255.00px;font-size:8.7px;line-height:8.7px;color:#2e2e2e;font-weight:normal;">8 Objekte kopieren</div>
<div class="b" style="left:230.80px;top:268.30px;width:170.70px;height:1.00px;background:rgba(0,0,0,0.09);"></div>
<div class="t" style="left:243.60px;top:274.00px;font-size:8.7px;line-height:8.7px;color:#2e2e2e;font-weight:normal;">Darstellungsoptionen einblenden</div>
<div class="b" style="left:230.80px;top:286.50px;width:170.70px;height:1.00px;background:rgba(0,0,0,0.09);"></div>
<div class="t" style="left:243.60px;top:292.00px;font-size:8.7px;line-height:8.7px;color:#2e2e2e;font-weight:normal;">Tags ...</div>
<div class="b" style="left:246.10px;top:307.80px;width:8.00px;height:8.00px;background:#f0433e;border-radius:50%;"></div>
<div class="b" style="left:260.27px;top:307.80px;width:8.00px;height:8.00px;background:#f5962e;border-radius:50%;"></div>
<div class="b" style="left:274.44px;top:307.80px;width:8.00px;height:8.00px;background:#f7c634;border-radius:50%;"></div>
<div class="b" style="left:288.61px;top:307.80px;width:8.00px;height:8.00px;background:#52c43c;border-radius:50%;"></div>
<div class="b" style="left:302.78px;top:307.80px;width:8.00px;height:8.00px;background:#3aa5f2;border-radius:50%;"></div>
<div class="b" style="left:316.95px;top:307.80px;width:8.00px;height:8.00px;background:#c77de8;border-radius:50%;"></div>
<div class="b" style="left:331.12px;top:307.80px;width:8.00px;height:8.00px;background:#9c9c9c;border-radius:50%;"></div>
<div class="b" style="left:230.80px;top:330.90px;width:170.70px;height:1.00px;background:rgba(0,0,0,0.09);"></div>
<div class="t" style="left:243.60px;top:336.00px;font-size:8.7px;line-height:8.7px;color:#2e2e2e;font-weight:normal;">Dienste</div>
<svg class="b" style="left:389.00px;top:337.60px" width="5" height="5.8" viewBox="0 0 5 5.8"><path d="M0 0 L5 2.9 L0 5.8 Z" fill="#222"/></svg>
</div></body></html>
